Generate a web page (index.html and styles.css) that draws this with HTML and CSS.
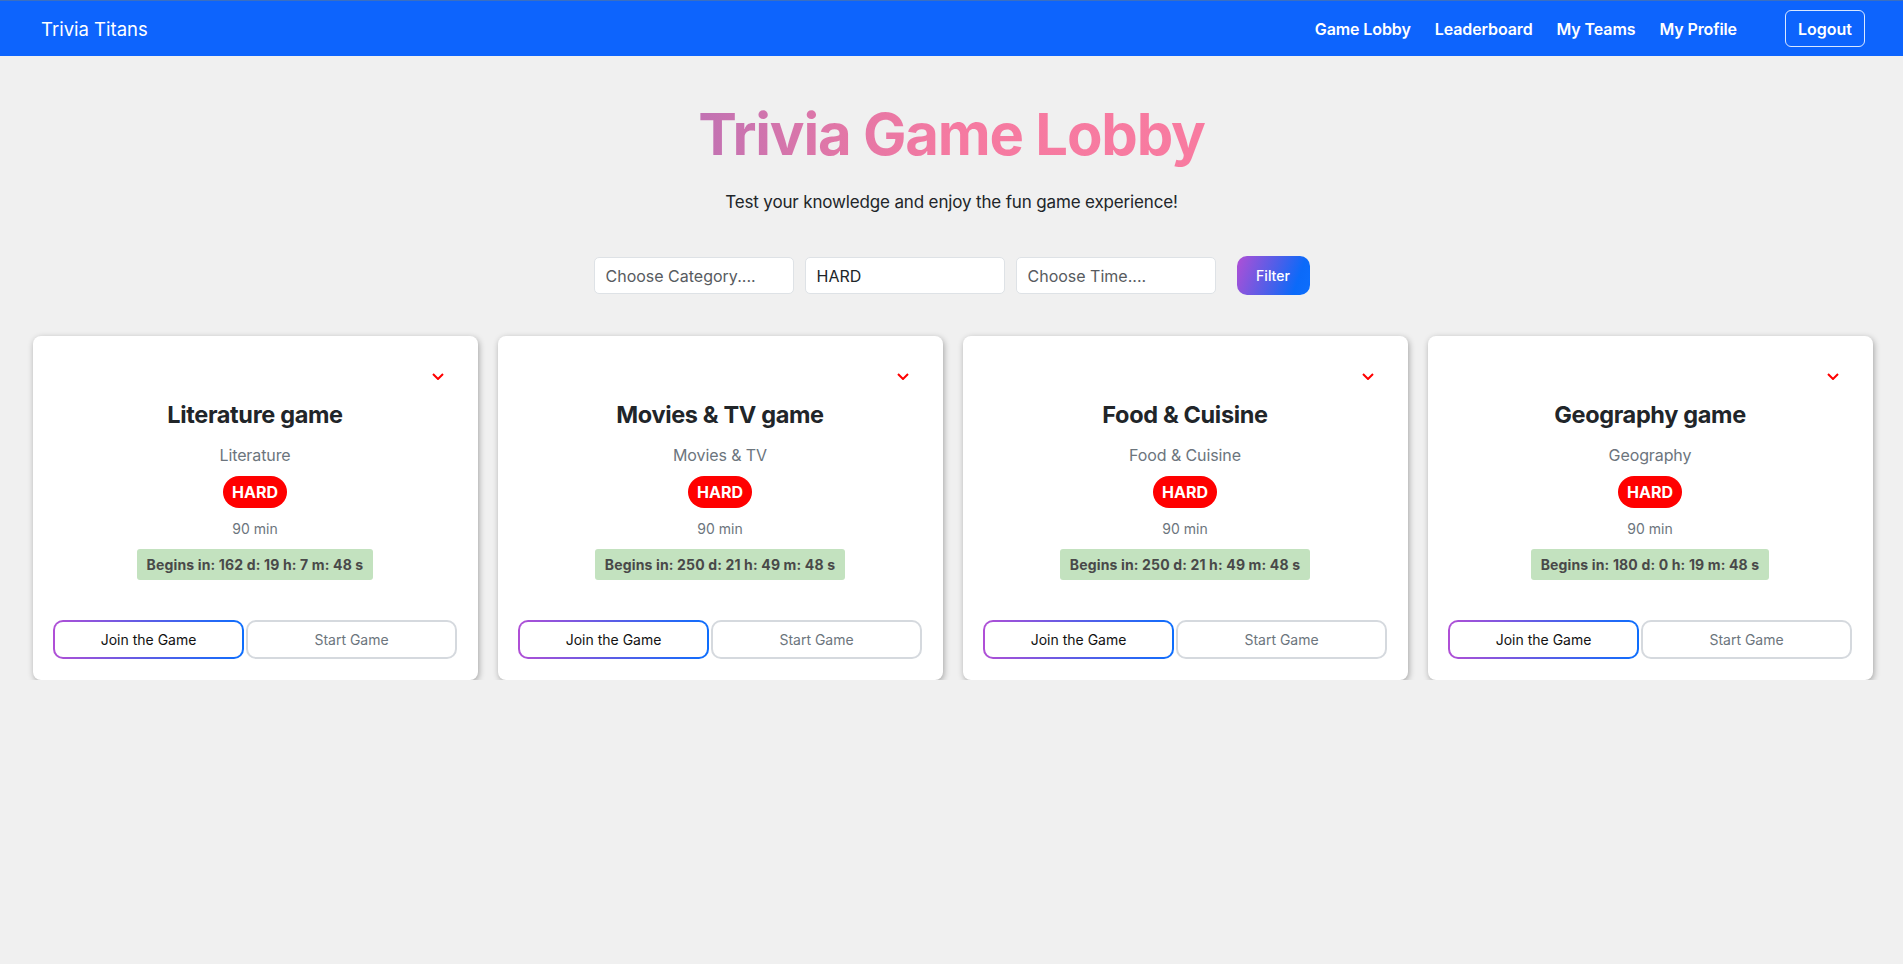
FILE: index.html
```html
<!DOCTYPE html>
<html lang="en">
<head>
<meta charset="utf-8">
<title>Trivia Titans</title>
<link rel="stylesheet" href="styles.css">
</head>
<body>
<nav class="navbar">
  <a class="brand" href="#">Trivia Titans</a>
  <div class="nav-right">
    <ul class="nav-links">
      <li><a href="#">Game Lobby</a></li>
      <li><a href="#">Leaderboard</a></li>
      <li><a href="#">My Teams</a></li>
      <li><a href="#">My Profile</a></li>
    </ul>
    <button class="logout">Logout</button>
  </div>
</nav>

<main class="lobby">
  <h1 class="lobby-title">Trivia Game Lobby</h1>
  <p class="lobby-sub">Test your knowledge and enjoy the fun game experience!</p>

  <form class="filters">
    <input class="filter-input" type="text" placeholder="Choose Category....">
    <input class="filter-input" type="text" value="HARD">
    <input class="filter-input" type="text" placeholder="Choose Time....">
    <button type="button" class="filter-btn">Filter</button>
  </form>

  <section class="cards">
    <article class="card">
      <div class="card-top"><svg class="chevron" width="12" height="7" viewBox="0 0 12 7"><polyline points="1,1 6,6 11,1" fill="none" stroke="#ff0000" stroke-width="2"/></svg></div>
      <h5 class="card-title">Literature game</h5>
      <p class="card-cat">Literature</p>
      <span class="badge">HARD</span>
      <p class="card-time">90 min</p>
      <div class="countdown">Begins in: 162 d: 19 h: 7 m: 48 s</div>
      <div class="card-actions">
        <button class="btn-join">Join the Game</button>
        <button class="btn-start">Start Game</button>
      </div>
    </article>

    <article class="card">
      <div class="card-top"><svg class="chevron" width="12" height="7" viewBox="0 0 12 7"><polyline points="1,1 6,6 11,1" fill="none" stroke="#ff0000" stroke-width="2"/></svg></div>
      <h5 class="card-title">Movies &amp; TV game</h5>
      <p class="card-cat">Movies &amp; TV</p>
      <span class="badge">HARD</span>
      <p class="card-time">90 min</p>
      <div class="countdown">Begins in: 250 d: 21 h: 49 m: 48 s</div>
      <div class="card-actions">
        <button class="btn-join">Join the Game</button>
        <button class="btn-start">Start Game</button>
      </div>
    </article>

    <article class="card">
      <div class="card-top"><svg class="chevron" width="12" height="7" viewBox="0 0 12 7"><polyline points="1,1 6,6 11,1" fill="none" stroke="#ff0000" stroke-width="2"/></svg></div>
      <h5 class="card-title">Food &amp; Cuisine</h5>
      <p class="card-cat">Food &amp; Cuisine</p>
      <span class="badge">HARD</span>
      <p class="card-time">90 min</p>
      <div class="countdown">Begins in: 250 d: 21 h: 49 m: 48 s</div>
      <div class="card-actions">
        <button class="btn-join">Join the Game</button>
        <button class="btn-start">Start Game</button>
      </div>
    </article>

    <article class="card">
      <div class="card-top"><svg class="chevron" width="12" height="7" viewBox="0 0 12 7"><polyline points="1,1 6,6 11,1" fill="none" stroke="#ff0000" stroke-width="2"/></svg></div>
      <h5 class="card-title">Geography game</h5>
      <p class="card-cat">Geography</p>
      <span class="badge">HARD</span>
      <p class="card-time">90 min</p>
      <div class="countdown">Begins in: 180 d: 0 h: 19 m: 48 s</div>
      <div class="card-actions">
        <button class="btn-join">Join the Game</button>
        <button class="btn-start">Start Game</button>
      </div>
    </article>
  </section>
</main>
</body>
</html>
```

FILE: styles.css
```css
* { box-sizing: border-box; }

html, body {
  margin: 0;
  padding: 0;
}

body {
  background: #f0f0f0;
  font-family: "Inter", "Noto Sans", sans-serif;
  color: #212529;
  font-size: 16px;
  line-height: 1.5;
}

/* Navbar */
.navbar {
  height: 56px;
  background: #0d64fd;
  border-top: 1px solid #3b6fc0;
  display: flex;
  align-items: center;
  justify-content: space-between;
  padding: 0 38px 0 41px;
}

.brand {
  color: #fff;
  text-decoration: none;
  font-size: 18.5px;
  font-weight: 400;
  line-height: 30px;
}

.nav-right {
  display: flex;
  align-items: center;
}

.nav-links {
  list-style: none;
  margin: 0 48px 0 0;
  padding: 0;
  display: flex;
  gap: 24px;
}

.nav-links a {
  color: #fff;
  text-decoration: none;
  font-size: 16px;
  font-weight: 600;
  line-height: 24px;
  letter-spacing: -0.1px;
}

.logout {
  font-family: inherit;
  background: transparent;
  color: #fff;
  border: 1px solid rgba(255, 255, 255, 0.85);
  border-radius: 6px;
  font-size: 16px;
  font-weight: 600;
  line-height: 24px;
  padding: 6px 12px;
  height: 37px;
  width: 80px;
  cursor: pointer;
}

/* Lobby */
.lobby {
  display: flex;
  flex-direction: column;
  align-items: center;
}

.lobby-title {
  margin: 42px 0 0;
  font-size: 58px;
  line-height: 72px;
  font-weight: 700;
  letter-spacing: -1.2px;
  background: linear-gradient(90deg, #c172b3 0%, #e477a6 30%, #f57aa1 50%, #f87ba0 100%);
  -webkit-background-clip: text;
  background-clip: text;
  color: transparent;
}

.lobby-sub {
  margin: 19px 0 0;
  font-size: 17px;
  line-height: 27px;
  letter-spacing: -0.15px;
  color: #212529;
}

.filters {
  margin-top: 40px;
  display: flex;
  align-items: center;
  gap: 11px;
}

.filter-input {
  width: 200px;
  height: 37px;
  font-family: inherit;
  font-size: 16px;
  color: #212529;
  background: #fff;
  border: 1px solid #dee2e6;
  border-radius: 5px;
  padding: 0 11px;
  outline: none;
}

.filter-input::placeholder {
  color: #575b60;
}

.filter-btn {
  margin-left: 10px;
  width: 73px;
  height: 39px;
  border: none;
  border-radius: 10px;
  background: linear-gradient(110deg, #b04fd6 0%, #4c5fe9 50%, #0b6af9 80%, #0d6efd 100%);
  color: #fff;
  font-family: inherit;
  font-size: 14px;
  font-weight: 500;
  cursor: pointer;
}

/* Cards */
.cards {
  align-self: stretch;
  margin-top: 41px;
  padding: 0 30px 0 33px;
  display: grid;
  grid-template-columns: repeat(4, 1fr);
  gap: 20px;
}

.card {
  background: #fff;
  border-radius: 8px;
  box-shadow: 1px 2px 6px rgba(0, 0, 0, 0.32);
  padding: 20px 21px 21px 20px;
  display: flex;
  flex-direction: column;
  align-items: center;
  text-align: center;
}

.card-top {
  align-self: stretch;
  height: 44px;
  display: flex;
  justify-content: flex-end;
  align-items: flex-start;
  padding: 17px 13px 0 0;
}

.chevron { display: block; }

.card-title {
  margin: 0;
  font-size: 23.5px;
  line-height: 29px;
  font-weight: 700;
  color: #212529;
  letter-spacing: -0.35px;
}

.card-cat {
  margin: 14px 0 0;
  font-size: 16px;
  line-height: 24px;
  letter-spacing: -0.1px;
  color: #6c757d;
}

.badge {
  margin-top: 9px;
  display: inline-block;
  background: #ff0000;
  color: #fff;
  font-weight: 700;
  font-size: 16px;
  line-height: 24px;
  padding: 4px 9px;
  border-radius: 16px;
}

.card-time {
  margin: 10px 0 0;
  font-size: 14px;
  line-height: 21px;
  color: #6c757d;
}

.countdown {
  margin-top: 10px;
  background: #c3e2bf;
  color: #494949;
  font-weight: 700;
  font-size: 14px;
  line-height: 21px;
  letter-spacing: 0.15px;
  padding: 5px 10px;
  border-radius: 3px;
}

.card-actions {
  align-self: stretch;
  margin-top: 40px;
  display: grid;
  grid-template-columns: 47.3% 1fr;
  gap: 2px;
}

.btn-join,
.btn-start {
  font-family: inherit;
  font-size: 14px;
  line-height: 21px;
  padding: 7px 10px;
  border-radius: 10px;
  cursor: pointer;
  height: 39px;
}

.btn-join {
  color: #111;
  border: 2px solid transparent;
  background:
    linear-gradient(#fff, #fff) padding-box,
    linear-gradient(90deg, #b04fd6 0%, #5a5de6 50%, #0d6efd 100%) border-box;
}

.btn-start {
  color: #6c757d;
  background: #fff;
  border: 2px solid #d5d9de;
}
```
